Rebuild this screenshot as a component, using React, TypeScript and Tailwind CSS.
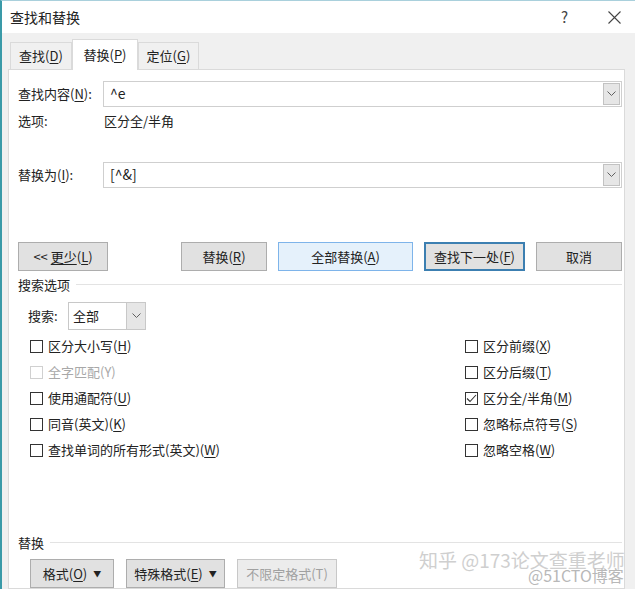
import React from "react";

const font = { fontFamily: '"Noto Sans CJK SC", "Microsoft YaHei", sans-serif' };

const U = ({ children }: { children: React.ReactNode }) => <span className="underline underline-offset-2">{children}</span>;

const Chevron = () => (
  <svg width="9" height="6" viewBox="0 0 9 6" fill="none" stroke="#606060" strokeWidth="1">
    <path d="M0.5 0.5 L4.5 4.5 L8.5 0.5" />
  </svg>
);

const ComboBox = ({ value }: { value: string }) => (
  <div className="flex h-[26px] flex-1 border border-[#cfcfcf] bg-white">
    <div className="flex-1 px-[6px] text-[14px] leading-[23px] text-[#222]">{value}</div>
    <div className="my-[1px] mr-[1px] flex w-[17px] items-center justify-center border border-[#c2c2c2] bg-[#e6e6e6]">
      <Chevron />
    </div>
  </div>
);

const Btn = ({
  children,
  className = "",
}: {
  children: React.ReactNode;
  className?: string;
}) => (
  <div
    className={`flex h-[29px] items-center justify-center whitespace-pre border text-[13px] ${className}`}
  >
    {children}
  </div>
);

const Check = ({
  label,
  checked = false,
  disabled = false,
}: {
  label: React.ReactNode;
  checked?: boolean;
  disabled?: boolean;
}) => (
  <div className="flex h-[26px] items-center gap-[5px]">
    <div
      className={`flex h-[13px] w-[13px] items-center justify-center border bg-white ${
        disabled ? "border-[#d0d0d0]" : "border-[#333]"
      }`}
    >
      {checked && (
        <svg width="11" height="9" viewBox="0 0 11 9" fill="none" stroke="#333" strokeWidth="1.1">
          <path d="M1 4.5 L4 7.5 L10 1" />
        </svg>
      )}
    </div>
    <span className={`text-[13px] ${disabled ? "text-[#a8a8a8]" : "text-[#222]"}`}>{label}</span>
  </div>
);

export default function App() {
  return (
    <div
      style={font}
      className="relative flex h-[589px] w-[635px] flex-col overflow-hidden border-l-2 border-t border-l-[#3a9aa8] border-t-[#a9d0dc] bg-[#f0f0f0] text-[#222]"
    >
      {/* title bar */}
      <div className="flex h-[32px] shrink-0 items-center bg-white pl-[8px] pr-[14px]">
        <span className="text-[14px]">查找和替换</span>
        <span className="ml-auto mr-[40px] text-[15px] text-[#444]">?</span>
        <svg width="13" height="13" viewBox="0 0 13 13" stroke="#444" strokeWidth="1.1">
          <path d="M0.5 0.5 L12.5 12.5 M12.5 0.5 L0.5 12.5" />
        </svg>
      </div>

      {/* tabs */}
      <div className="flex h-[36px] shrink-0 items-end pl-[8px]">
        <div className="mb-[-1px] flex h-[28px] w-[62px] items-center justify-center border border-[#dadada] bg-[#f0f0f0] text-[13px]">
          查找(<U>D</U>)
        </div>
        <div className="relative z-10 mb-[-1px] flex h-[31px] w-[66px] items-center justify-center border border-b-0 border-[#dadada] bg-white text-[13px]">
          替换(<U>P</U>)
        </div>
        <div className="mb-[-1px] flex h-[28px] w-[61px] items-center justify-center border border-[#dadada] bg-[#f0f0f0] text-[13px]">
          定位(<U>G</U>)
        </div>
      </div>

      <div className="flex flex-1 pl-[6px] pr-[10px]">
        {/* panel */}
        <div className="flex flex-1 flex-col border border-[#dadada] bg-white pl-[9px] pr-[2px] pt-[11px]">
          <div className="flex items-center">
            <span className="w-[85px] text-[13px]">
              查找内容(<U>N</U>):
            </span>
            <ComboBox value="^e" />
          </div>
          <div className="mt-[5px] flex text-[13px] leading-[17px]">
            <span className="w-[86px]">选项:</span>
            <span>区分全/半角</span>
          </div>

          <div className="mt-[33px] flex items-center">
            <span className="w-[85px] text-[13px]">
              替换为(<U>I</U>):
            </span>
            <ComboBox value="[^&]" />
          </div>

          <div className="mt-[54px] flex">
            <Btn className="w-[90px] border-[#adadad] bg-[#e1e1e1]">
              {"<< "}
              <U>更少</U>(<U>L</U>)
            </Btn>
            <Btn className="ml-[73px] w-[86px] border-[#adadad] bg-[#e1e1e1]">
              替换(<U>R</U>)
            </Btn>
            <Btn className="ml-[11px] w-[135px] border-[#7eb4ea] bg-[#e5f1fb]">
              全部替换(<U>A</U>)
            </Btn>
            <Btn className="ml-[11px] w-[101px] border-2 border-[#3c7fb1] bg-[#e1e1e1]">
              查找下一处(<U>F</U>)
            </Btn>
            <Btn className="ml-[11px] w-[86px] border-[#adadad] bg-[#e1e1e1]">取消</Btn>
          </div>

          {/* search options group */}
          <div className="mt-[5px] flex items-center gap-[6px] text-[13px] leading-[17px]">
            <span>搜索选项</span>
            <div className="h-px flex-1 bg-[#e3e3e3]" />
          </div>

          <div className="mt-[9px] flex items-center pl-[10px]">
            <span className="w-[40px] text-[13px]">搜索:</span>
            <div className="flex h-[28px] w-[78px] border border-[#c8c8c8] bg-white">
              <span className="flex-1 pl-[4px] text-[13px] leading-[26px]">全部</span>
              <div className="flex w-[19px] items-center justify-center border-l border-[#c8c8c8] bg-[#e6e6e6]">
                <Chevron />
              </div>
            </div>
          </div>

          <div className="mt-[3px] flex pl-[12px]">
            <div className="flex flex-1 flex-col">
              <Check label={<>区分大小写(<U>H</U>)</>} />
              <Check label="全字匹配(Y)" disabled />
              <Check label={<>使用通配符(<U>U</U>)</>} />
              <Check label={<>同音(英文)(<U>K</U>)</>} />
              <Check label={<>查找单词的所有形式(英文)(<U>W</U>)</>} />
            </div>
            <div className="flex w-[157px] flex-col">
              <Check label={<>区分前缀(<U>X</U>)</>} />
              <Check label={<>区分后缀(<U>T</U>)</>} />
              <Check label={<>区分全/半角(<U>M</U>)</>} checked />
              <Check label={<>忽略标点符号(<U>S</U>)</>} />
              <Check label={<>忽略空格(<U>W</U>)</>} />
            </div>
          </div>

          {/* replace group */}
          <div className="mt-[71px] flex items-center gap-[6px] text-[13px] leading-[17px]">
            <span>替换</span>
            <div className="h-px flex-1 bg-[#e3e3e3]" />
          </div>

          <div className="mt-[8px] flex pl-[12px]">
            <Btn className="w-[84px] gap-[6px] border-[#adadad] bg-[#e1e1e1]">
              <span>
                格式(<U>O</U>)
              </span>
              <span className="text-[8px]">▼</span>
            </Btn>
            <Btn className="ml-[12px] w-[99px] gap-[6px] border-[#adadad] bg-[#e1e1e1]">
              <span>
                特殊格式(<U>E</U>)
              </span>
              <span className="text-[8px]">▼</span>
            </Btn>
            <Btn className="ml-[12px] w-[100px] border-[#c8c8c8] bg-[#ececec] text-[#a0a0a0]">
              不限定格式(T)
            </Btn>
          </div>
        </div>
      </div>

      {/* watermarks */}
      <div className="pointer-events-none absolute left-[417px] top-[547px] whitespace-nowrap text-[19px] leading-[24px] text-[#cfcfcf]">
        知乎 @173论文查重老师
      </div>
      <div className="pointer-events-none absolute left-[526px] top-[563px] whitespace-nowrap text-[16px] leading-[22px] text-[#b8b8b8]">
        @51CTO博客
      </div>
    </div>
  );
}
